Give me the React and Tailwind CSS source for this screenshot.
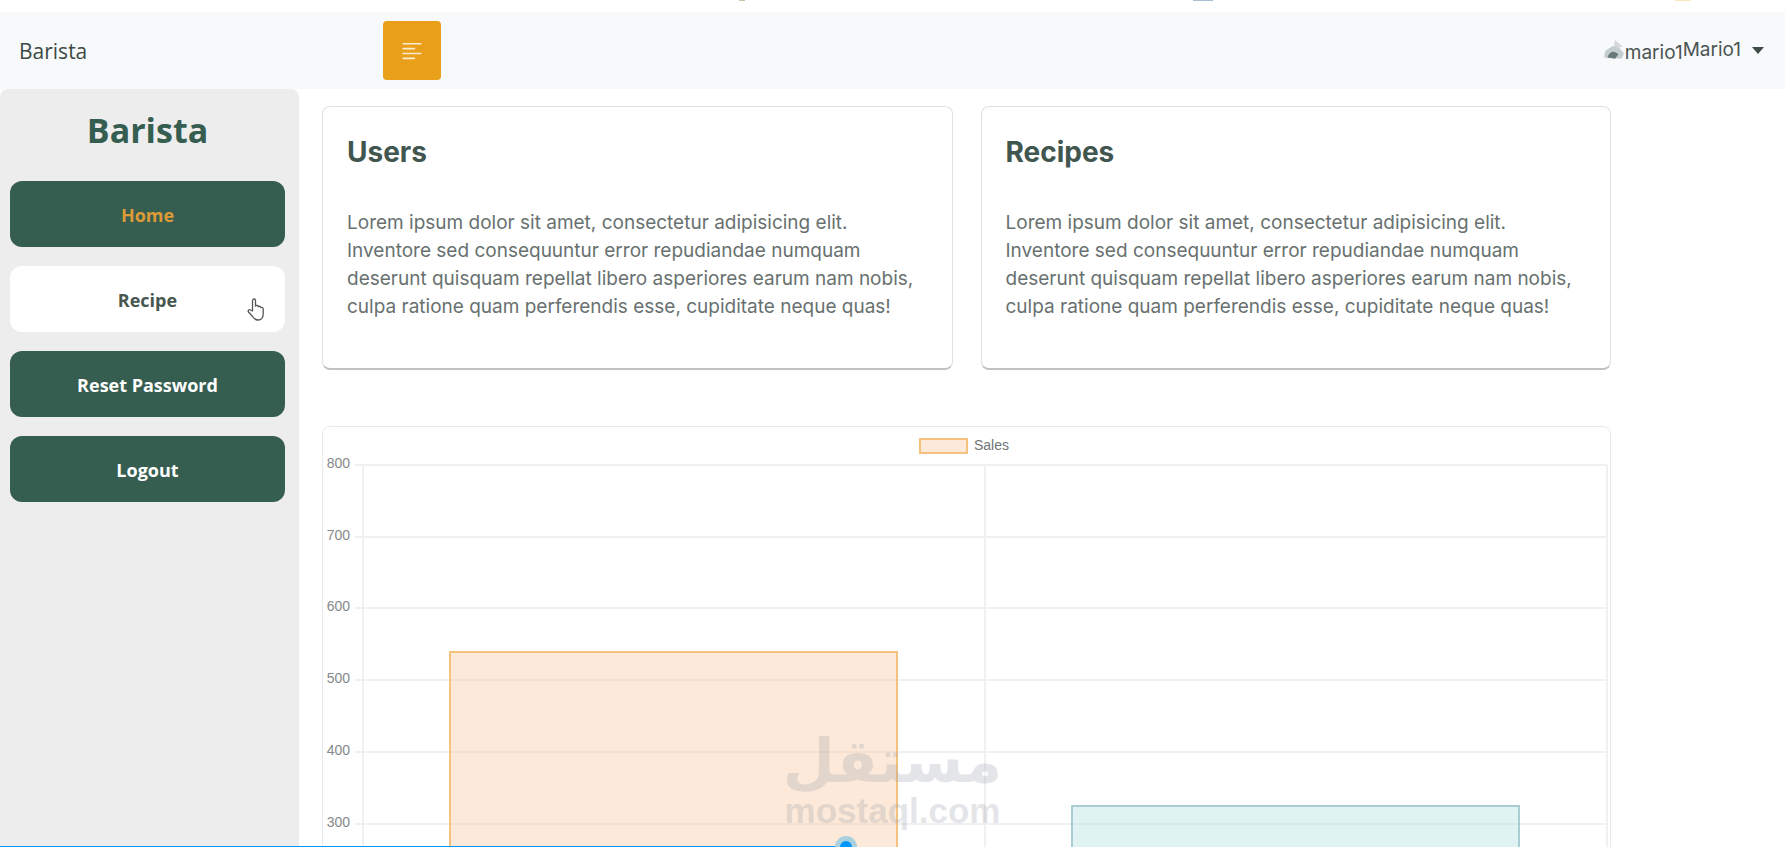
import React from 'react';
import { BsTextLeft } from 'react-icons/bs';

const links = [
  { label: 'Home', style: 'bg-[#355e51] text-[#dd9a35]' },
  { label: 'Recipe', style: 'bg-white text-[#46574f]' },
  { label: 'Reset Password', style: 'bg-[#355e51] text-white' },
  { label: 'Logout', style: 'bg-[#355e51] text-white' },
];

const ticks = [800, 700, 600, 500, 400, 300];

function Navbar() {
  return (
    <header className="flex h-[77px] items-center bg-[#f8f9fb]">
      <div className="w-[383px] pt-0.5 pl-[19px]">
        <a href="#" className="text-[21px] text-[#3c4a44]">Barista</a>
      </div>
      <button aria-label="Toggle sidebar" className="flex h-[59px] w-[58px] items-center justify-center rounded-sm bg-[#ea9f1a] text-white/80">
        <BsTextLeft className="size-[26px]" />
      </button>
      <button className="ml-auto flex items-center pr-[21px] font-['Inter',sans-serif] text-[19px] text-[#4a5552]">
        <svg className="size-[22px]" viewBox="0 0 20 20" aria-hidden="true">
          <path d="M1 16 2 10 8 6l5-1 6 7-2 5Z" fill="#c3ced0" />
          <path d="m11 0 7 6-5 1-3-3Z" fill="#d3d7d8" />
          <path d="M4 16c2-6 6-7 10-3l-3 4Z" fill="#68777a" />
        </svg>
        <span className="pt-1.5">mario1</span>
        <span>Mario1</span>
        <span className="ml-[11px] border-x-[6px] border-t-[7px] border-x-transparent border-t-[#3f4b47]" />
      </button>
    </header>
  );
}

function Sidebar() {
  return (
    <aside className="w-[299px] shrink-0 rounded-t-lg bg-[#ededed] pr-[14px] pl-[10px]">
      <h1 className="pt-[14px] text-center text-[34px] leading-[54px] font-bold text-[#355e51]">Barista</h1>
      <nav className="mt-6 flex flex-col gap-[19px]">
        {links.map((link) => (
          <a key={link.label} href="#" className={`relative flex h-[66px] items-center justify-center rounded-xl pt-0.5 text-[18px] font-bold ${link.style}`}>
            {link.label}
            {link.label === 'Recipe' && <Pointer />}
          </a>
        ))}
      </nav>
    </aside>
  );
}

function Pointer() {
  return (
    <svg className="absolute top-8 right-5 h-6 w-[18px]" viewBox="0 0 18 24" fill="#fff" stroke="#555" strokeWidth="1.3" strokeLinejoin="round" aria-hidden="true">
      <path d="M5.500 13V2.500c0-2 3-2 3 0V8c1-1 2.500-.6 2.700.6 1-.7 2.300-.3 2.500.9 1-.5 2.500 0 2.500 1.500v5c0 3.500-2 6-5 6-3.500 0-4.500-1.500-6-4L1.500 14c-1-1.500.8-3 2-2Z" />
    </svg>
  );
}

function InfoCard({ title }) {
  return (
    <section className="rounded-lg border border-b-2 border-[#dfe1e2] border-b-[#bfc3c5] px-6 pt-6 pb-[47px] font-['Inter',sans-serif]">
      <h2 className="text-[28px] leading-[42px] font-bold text-[#41564e]">{title}</h2>
      <p className="mt-9 text-[19px] leading-[28px] text-[#68716f]">
        Lorem ipsum dolor sit amet, consectetur adipisicing elit. Inventore sed consequuntur error
        repudiandae numquam deserunt quisquam repellat libero asperiores earum nam nobis, culpa
        ratione quam perferendis esse, cupiditate neque quas!
      </p>
    </section>
  );
}

function SalesChart() {
  return (
    <section className="mt-[56px] rounded-lg border border-[#e9eaeb]">
      <svg className="block w-full font-['Liberation_Sans',sans-serif] text-[14px]" viewBox="0 0 1287 645" role="img" aria-label="Sales">
        <g stroke="#f0f0f0" strokeWidth="2">
          {ticks.map((tick, i) => (
            <path key={tick} d={`M32 ${38 + Math.round(i * 71.7)}H1284`} />
          ))}
          <path d="M40 38V611M662 38V611M1284 38V611" />
        </g>
        {ticks.map((tick, i) => (
          <text key={tick} x="27" y={41 + Math.round(i * 71.7)} textAnchor="end" fill="#85888a">{tick}</text>
        ))}
        <rect x="127" y="225" width="447" height="386" fill="#f9c89f" fillOpacity=".4" stroke="#f4c27c" strokeWidth="2" />
        <rect x="749" y="379" width="447" height="232" fill="#aee3df" fillOpacity=".4" stroke="#a9cdd2" strokeWidth="2" />
        <rect x="597" y="12" width="47" height="14" fill="#fce9d9" stroke="#f4c27c" strokeWidth="2" />
        <text x="651" y="23" fill="#707477">Sales</text>
      </svg>
    </section>
  );
}

export default function App() {
  return (
    <div className="relative flex h-screen flex-col overflow-hidden bg-white font-['Open_Sans','Noto_Sans',sans-serif]">
      {/* lower edge of the bookmarks bar */}
      <div className="flex h-3 shrink-0 justify-end pr-[94px]">
        <span className="mr-[448px] h-px w-[6px] bg-[#c9c3a8]" />
        <span className="mr-[462px] h-px w-5 bg-[#a9bfd4]" />
        <span className="h-px w-4 bg-[#fbe9b8]" />
      </div>
      <Navbar />
      <div className="flex min-h-0 flex-1">
        <Sidebar />
        <main className="min-w-0 flex-1 pt-[17px] pr-6 pl-[23px]">
          <div className="max-w-[1289px]">
            <div className="grid grid-cols-2 gap-7">
              <InfoCard title="Users" />
              <InfoCard title="Recipes" />
            </div>
            <SalesChart />
          </div>
        </main>
      </div>

      {/* watermark */}
      <div className="pointer-events-none absolute inset-x-0 bottom-4 flex flex-col items-center text-[#959ca5] opacity-25">
        <span lang="ar" dir="rtl" className="font-['DejaVu_Sans',sans-serif] text-[60px] leading-[60px] font-bold">مستقل</span>
        <span className="font-['Liberation_Sans',sans-serif] text-[35px] leading-[40px] font-bold">mostaql.com</span>
      </div>

      {/* playback position */}
      <div className="absolute inset-x-0 bottom-0 h-px">
        <div className="relative h-px w-[47.4%] bg-[#0095ff]">
          <span className="absolute -top-[10px] -right-[11px] size-[22px] rounded-full border-[5px] border-[#a9d0de] bg-[#0095ff]" />
        </div>
      </div>
    </div>
  );
}
